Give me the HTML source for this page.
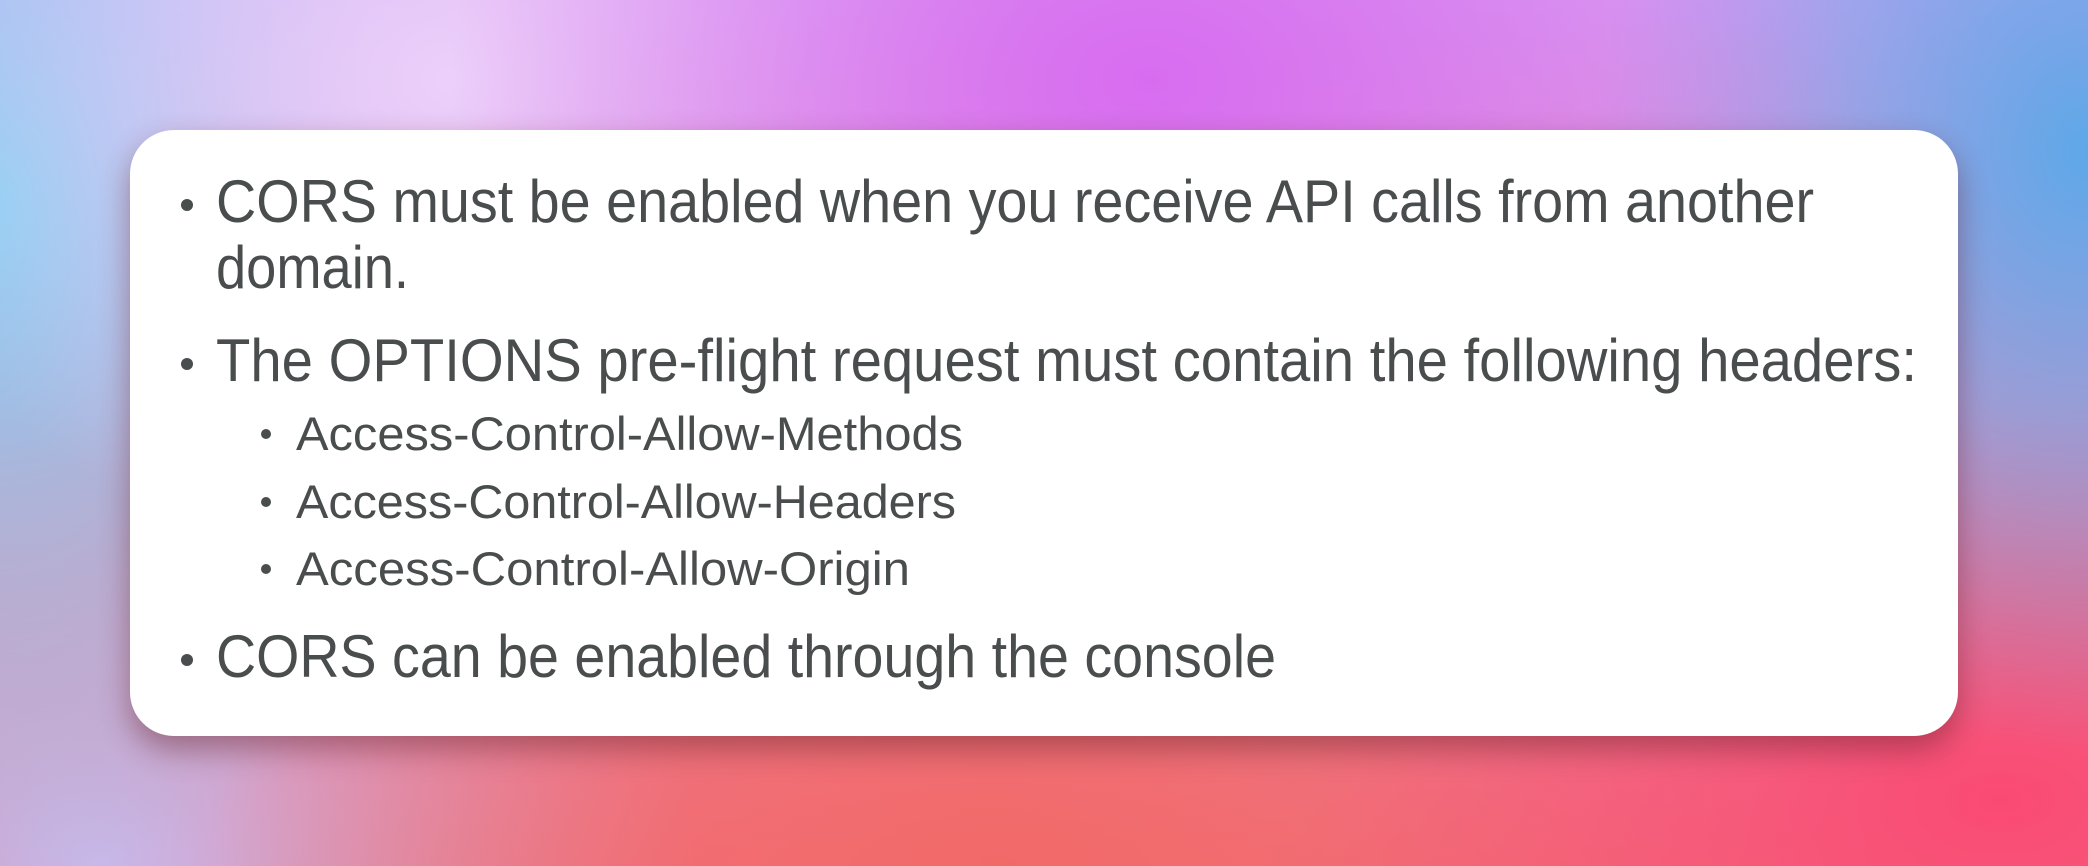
<!DOCTYPE html>
<html><head><meta charset="utf-8"><style>
html,body{margin:0;padding:0;width:2088px;height:866px;overflow:hidden}
body{position:relative;background:
radial-gradient(ellipse 700px 500px at 1150px 80px,#d86cf0 0%,rgba(216,108,240,0) 100%),
radial-gradient(ellipse 600px 500px at 450px 80px,#ecd0fa 0%,rgba(236,208,250,0) 100%),
radial-gradient(ellipse 500px 600px at 2088px 150px,#5ea8e8 0%,rgba(94,168,232,0) 100%),
radial-gradient(ellipse 500px 700px at 0px 200px,#84d0f2 0%,rgba(132,208,242,0) 100%),
radial-gradient(ellipse 700px 400px at 2000px 800px,#fa4a74 0%,rgba(250,74,116,0) 100%),
radial-gradient(ellipse 800px 400px at 1000px 866px,#f26a68 0%,rgba(242,106,104,0) 100%),
radial-gradient(ellipse 600px 400px at 100px 866px,#c8b8ea 0%,rgba(200,184,234,0) 100%),
linear-gradient(180deg,#d8a0f0 0%,#e88ab0 60%,#f07080 100%)}
.card{position:absolute;left:130px;top:130px;width:1828px;height:606px;background:#fff;border-radius:44px;box-shadow:0 14px 30px rgba(100,30,40,.45)}
svg{position:absolute;left:0;top:0}
text{font-family:"Liberation Sans",sans-serif;fill:#4a4d4d}
</style></head><body>
<div class="card"></div>
<svg width="2088" height="866" viewBox="0 0 2088 866">
<g fill="#4a4d4d">
<circle cx="187" cy="205" r="6"/>
<circle cx="187" cy="364" r="6"/>
<circle cx="187" cy="660" r="6"/>
<circle cx="266" cy="434" r="5"/>
<circle cx="266" cy="502" r="5"/>
<circle cx="266" cy="569" r="5"/>
</g>
<text x="216" y="222" font-size="60" textLength="1598" lengthAdjust="spacingAndGlyphs">CORS must be enabled when you receive API calls from another</text>
<text x="216" y="288" font-size="60" textLength="193" lengthAdjust="spacingAndGlyphs">domain.</text>
<text x="216" y="381" font-size="60" textLength="1701" lengthAdjust="spacingAndGlyphs">The OPTIONS pre-flight request must contain the following headers:</text>
<text x="296" y="450" font-size="47" textLength="667" lengthAdjust="spacingAndGlyphs">Access-Control-Allow-Methods</text>
<text x="296" y="518" font-size="47" textLength="660" lengthAdjust="spacingAndGlyphs">Access-Control-Allow-Headers</text>
<text x="296" y="585" font-size="47" textLength="614" lengthAdjust="spacingAndGlyphs">Access-Control-Allow-Origin</text>
<text x="216" y="677" font-size="60" textLength="1060" lengthAdjust="spacingAndGlyphs">CORS can be enabled through the console</text>
</svg>
</body></html>
